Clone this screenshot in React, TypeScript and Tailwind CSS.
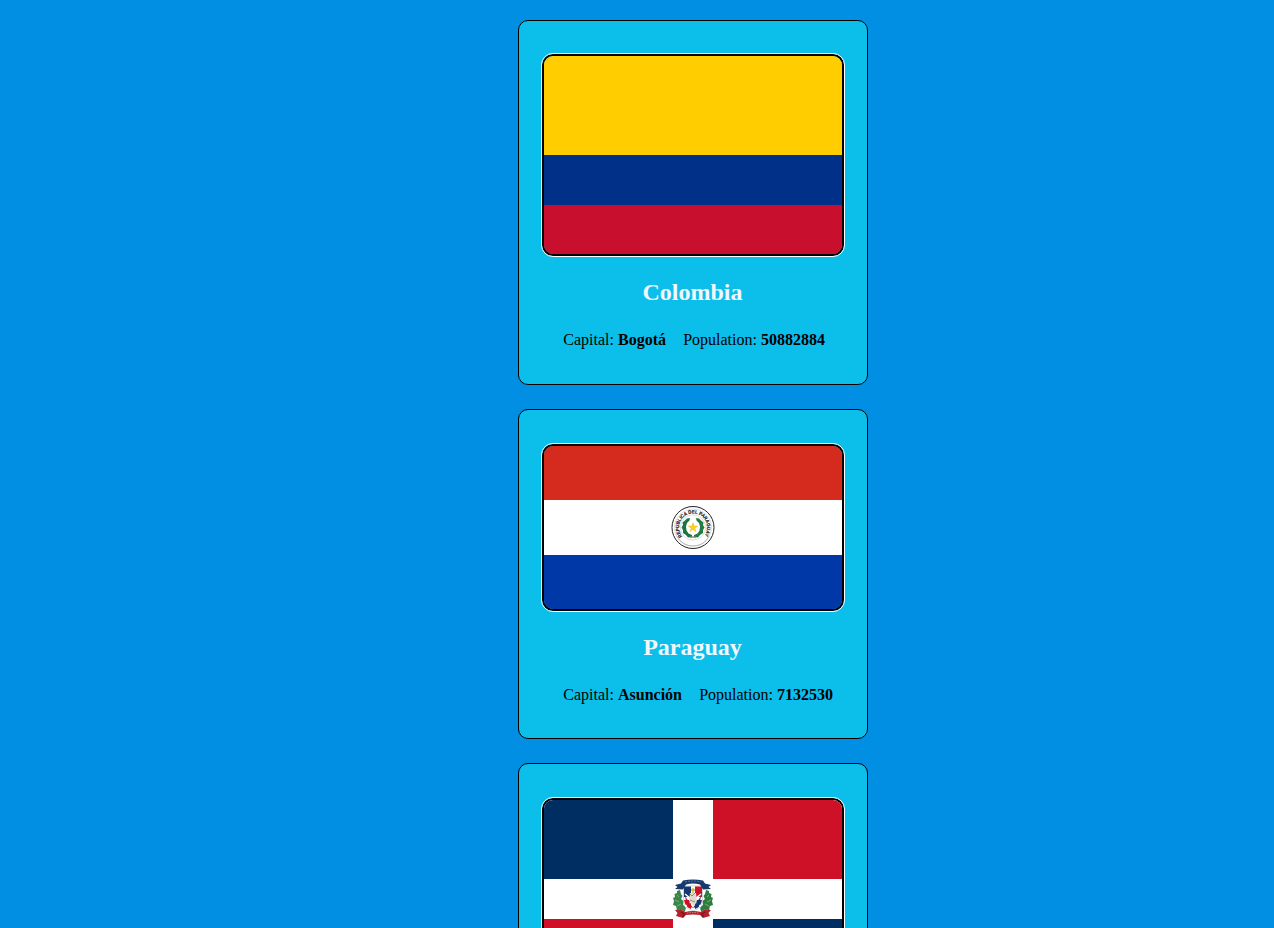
import type { ReactNode } from "react";

function ColombiaFlag() {
  return (
    <svg className="block h-full w-full" viewBox="0 0 298 198" preserveAspectRatio="none" shapeRendering="crispEdges">
      <rect width="298" height="99" fill="#ffcd00" />
      <rect y="99" width="298" height="50" fill="#003087" />
      <rect y="149" width="298" height="49" fill="#c8102e" />
    </svg>
  );
}

function ParaguayFlag() {
  return (
    <svg className="block h-full w-full" viewBox="0 0 298 163" preserveAspectRatio="none">
      <rect width="298" height="54" fill="#d52b1e" />
      <rect y="54" width="298" height="55" fill="#fff" />
      <rect y="109" width="298" height="54" fill="#0038a8" />
      <g transform="translate(149 81.5)">
        <circle r="21" fill="#fff" stroke="#222" strokeWidth="1" />
        <circle r="18.4" fill="none" stroke="#aaa" strokeWidth="0.4" />
        <path d="M-16 9 A18.2 18.2 0 0 0 16 9" fill="none" stroke="#aaa" strokeWidth="0.8" />
        <path id="seal-arc" d="M-10.7 9 A14 14 0 1 1 10.7 9" fill="none" />
        <text fontSize="4.9" fontWeight="700" fill="#111" stroke="#111" strokeWidth="0.15" fontFamily="Liberation Sans, sans-serif">
          <textPath href="#seal-arc" textLength="62" lengthAdjust="spacingAndGlyphs">
            REPUBLICA DEL PARAGUAY
          </textPath>
        </text>
        <circle r="12.6" fill="none" stroke="#aaa" strokeWidth="0.4" />
        <path d="M-3 -9.5 L-6 -9 L-8 -7 L-10.5 -5 L-10 -2.5 L-11.5 0 L-10 2.5 L-10 5.5 L-7 7.5 L-5 10 L-1 9.5 L-1 7.5 L-4.5 6 L-6.5 3 L-7 -1 L-6 -4.5 L-3.5 -7Z" fill="#19743f" />
        <path d="M3 -9.5 L6 -9 L8 -7 L10.5 -5 L10 -2.5 L11.5 0 L10 2.5 L10 5.5 L7 7.5 L5 10 L1 9.5 L1 7.5 L4.5 6 L6.5 3 L7 -1 L6 -4.5 L3.5 -7Z" fill="#237c48" />
        <path d="M-3 10.4 L3 8.6 M3 10.4 L-3 8.6" stroke="#7c7b56" strokeWidth="0.8" />
        <path d="M0 -5 L1.2 -1.6 L4.8 -1.5 L1.9 .7 L3 4.2 L0 2.1 L-3 4.2 L-1.9 .7 L-4.8 -1.5 L-1.2 -1.6Z" fill="#ffce1f" stroke="#e0a800" strokeWidth="0.3" />
      </g>
    </svg>
  );
}

function DominicanFlag() {
  return (
    <svg className="block h-full w-full" viewBox="0 0 298 199" preserveAspectRatio="none">
      <rect width="298" height="199" fill="#fff" />
      <rect width="129" height="79" fill="#002d62" />
      <rect x="169" width="129" height="79" fill="#ce1126" />
      <rect y="119" width="129" height="80" fill="#ce1126" />
      <rect x="169" y="119" width="129" height="80" fill="#002d62" />
      <g transform="translate(149 99)">
        <path d="M-13 -9 L-16 -8 L-16 -6 L-18.5 -5 L-18 -2 L-20 -1 L-19 2 L-20 6 L-17 7 L-16 11 L-12 10 L-8 13 L-7 8 L-10 6 L-9.5 2 L-12 0 L-10.5 -3 L-12 -5Z" fill="#39864a" />
        <path d="M13 -9 L16 -8 L16 -6 L18.5 -5 L18 -2 L20 -1 L19 2 L20 6 L17 7 L16 11 L12 10 L8 13 L7 8 L10 6 L9.5 2 L12 0 L10.5 -3 L12 -5Z" fill="#2d7d3e" />
        <path d="M-16 -4 L-14 -2 M-18 1 L-14 3 M-16 7 L-12 5 M16 -4 L14 -2 M18 1 L14 3 M16 7 L12 5" stroke="#9ac18d" strokeWidth="0.7" />
        <path d="M-9.5 -13 H9.5 V3 Q9 9 0 12 Q-9 9 -9.5 3Z" fill="#fff" stroke="#aaa" strokeWidth="0.5" />
        <path d="M-9 -12.5 H-2 V-2 H-9Z M2 1 H9 Q8 8 2 10Z" fill="#15386e" />
        <path d="M2 -12.5 H9 V-2 H2Z M-9 1 H-2 V10 Q-8 8 -9 1Z" fill="#ce1126" />
        <path d="M-8 -5 L8 8 M8 -5 L-8 8" stroke="#fff" strokeWidth="1.4" />
        <path d="M-8 -3 L0 9 L-6 7Z" fill="#ce1126" />
        <path d="M8 -3 L0 9 L6 7Z" fill="#15386e" />
        <path d="M-3 -6 L3 -6 L4 2 L1 7 L-4 2Z" fill="#dedbd1" />
        <path d="M0 -11 V-6 M-2 -9 H2" stroke="#d4aa35" strokeWidth="1.3" />
        <path d="M-3 -5 L-1 -3 L2 -6 M-3 1 L2 3" fill="none" stroke="#8d714f" strokeWidth="0.8" />
        <path d="M-18 -14 L-12 -15.5 L-10 -18.5 Q0 -20.5 10 -18.5 L12 -15.5 L18 -14 L15.5 -12 L18 -10 L10 -9.5 L7 -14.5 Q0 -16.5 -7 -14.5 L-10 -9.5 L-18 -10 L-15.5 -12Z" fill="#17396b" />
        <path d="M-8 -17 Q0 -19 8 -17" fill="none" stroke="#9caabd" strokeWidth="0.5" strokeDasharray="2 1" />
        <path d="M-18 11 L-12 10 L-8 13 Q0 11 8 13 L12 10 L18 11 L15.5 14 L17 17 L10 19 L7 16 Q0 15 -7 16 L-10 19 L-17 17 L-15.5 14Z" fill="#b5202c" />
        <path d="M-6 14.2 Q0 12.8 6 14.2" fill="none" stroke="#d8a49d" strokeWidth="0.7" strokeDasharray="1.5 1" />
        <path d="M-12 13 L-9 15 L-10 18 M12 13 L9 15 L10 18" fill="none" stroke="#701a20" strokeWidth="1.4" />
      </g>
    </svg>
  );
}

type CountryProps = {
  name?: string;
  capital?: string;
  population?: string;
  flag: ReactNode;
  cardClass: string;
  flagSize: string;
};

function CountryCard({ name, capital, population, flag, cardClass, flagSize }: CountryProps) {
  return (
    <article className={`flex w-[350px] shrink-0 flex-col rounded-[10px] border border-black bg-[#0cbeea] px-[23px] ${cardClass}`}>
      <div className={`w-[302px] shrink-0 overflow-hidden rounded-[11px] border-2 border-black outline outline-1 outline-white ${flagSize}`}>
        {flag}
      </div>
      {name && <h2 className="mt-[22px] pr-px text-center text-2xl leading-7 font-bold text-[#f0f8ff]">{name}</h2>}
      {capital && (
        <div className="mt-[25px] flex gap-[17.2px] pl-[21.3px] text-base leading-[18px] whitespace-nowrap text-black">
          <p>Capital: <strong>{capital}</strong></p>
          <p>Population: <strong>{population}</strong></p>
        </div>
      )}
    </article>
  );
}

export default function App() {
  return (
    <main className="flex h-screen flex-col items-center gap-6 overflow-hidden bg-[#008fe3] pt-5 pl-28 font-['Liberation_Serif',serif]">
      <CountryCard name="Colombia" capital="Bogotá" population="50882884" flag={<ColombiaFlag />} cardClass="h-[365px] pt-[33px]" flagSize="h-[202px]" />
      <CountryCard name="Paraguay" capital="Asunción" population="7132530" flag={<ParaguayFlag />} cardClass="h-[330px] pt-[34px]" flagSize="h-[167px]" />
      <CountryCard flag={<DominicanFlag />} cardClass="h-[366px] pt-[34px]" flagSize="h-[203px]" />
    </main>
  );
}
